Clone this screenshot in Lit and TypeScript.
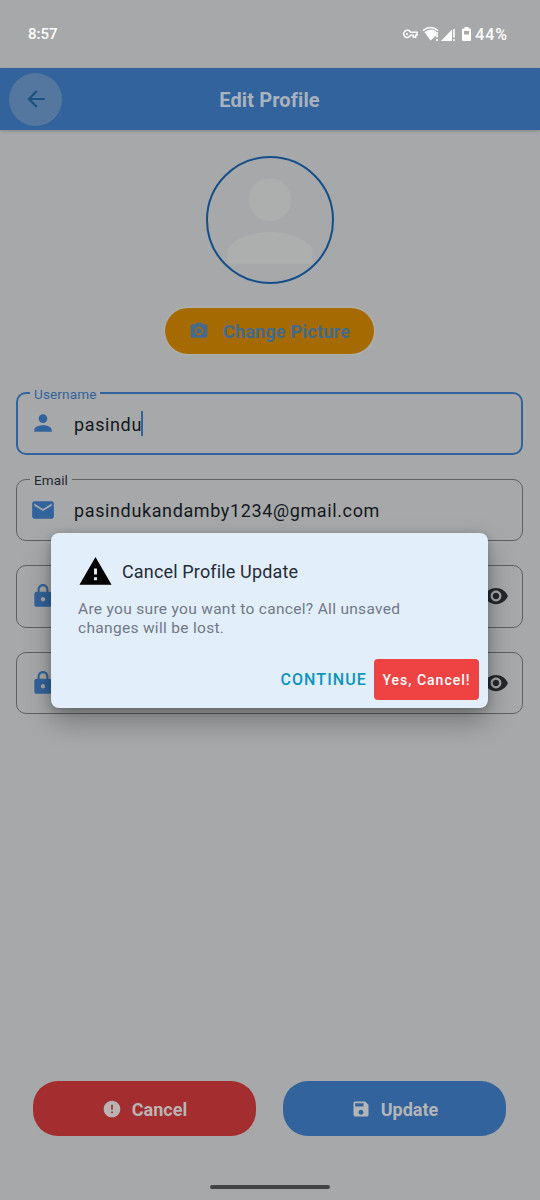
import { LitElement, html, css, svg, nothing } from "lit";
import { customElement, property } from "lit/decorators.js";

const icons = {
  back: svg`<path d="M20 11H7.83l5.59-5.59L12 4l-8 8 8 8 1.41-1.41L7.83 13H20z"/>`,
  camera: svg`<path fill-rule="evenodd" d="M9 2 7.17 4H4a2 2 0 0 0-2 2v12c0 1.100.9 2 2 2h16a2 2 0 0 0 2-2V6a2 2 0 0 0-2-2h-3.170L15 2zM12 17a5 5 0 1 1 0-10 5 5 0 0 1 0 10z"/><circle cx="12" cy="12" r="3.200"/>`,
  person: svg`<path d="M12 12c2.210 0 4-1.790 4-4s-1.790-4-4-4-4 1.790-4 4 1.790 4 4 4zm0 2c-2.670 0-8 1.340-8 4v2h16v-2c0-2.660-5.330-4-8-4z"/>`,
  mail: svg`<path d="M20 4H4c-1.100 0-1.990.9-1.990 2L2 18c0 1.100.9 2 2 2h16c1.100 0 2-.9 2-2V6c0-1.100-.9-2-2-2zm0 4-8 5-8-5V6l8 5 8-5z"/>`,
  lock: svg`<path d="M18 8h-1V6c0-2.760-2.240-5-5-5S7 3.240 7 6v2H6c-1.100 0-2 .9-2 2v10c0 1.100.9 2 2 2h12c1.100 0 2-.9 2-2V10c0-1.100-.9-2-2-2zm-6 9c-1.100 0-2-.9-2-2s.9-2 2-2 2 .9 2 2-.9 2-2 2zm3.100-9H8.900V6c0-1.710 1.390-3.100 3.100-3.100s3.100 1.390 3.100 3.100z"/>`,
  eye: svg`<path d="M12 4.500C7 4.500 2.730 7.610 1 12c1.730 4.390 6 7.500 11 7.500s9.270-3.110 11-7.500c-1.730-4.390-6-7.500-11-7.500zM12 17c-2.760 0-5-2.240-5-5s2.240-5 5-5 5 2.240 5 5-2.240 5-5 5zm0-8c-1.660 0-3 1.340-3 3s1.340 3 3 3 3-1.340 3-3-1.340-3-3-3z"/>`,
  warning: svg`<path d="M1 21h22L12 2zm12-3h-2v-2h2zm0-4h-2v-4h2z"/>`,
  error: svg`<path d="M12 2C6.480 2 2 6.480 2 12s4.480 10 10 10 10-4.480 10-10S17.520 2 12 2zm1 15h-2v-2h2zm0-4h-2V7h2z"/>`,
  save: svg`<path d="M17 3H5a2 2 0 0 0-2 2v14a2 2 0 0 0 2 2h14c1.100 0 2-.9 2-2V7zm-5 16c-1.660 0-3-1.340-3-3s1.340-3 3-3 3 1.340 3 3-1.340 3-3 3zm3-10H5V5h10z"/>`,
};

const icon = (name: keyof typeof icons, size: number) =>
  html`<svg width=${size} height=${size} viewBox="0 0 24 24" fill="currentColor" aria-hidden="true">${icons[name]}</svg>`;

@customElement("profile-field")
class ProfileField extends LitElement {
  @property() label = "";
  @property() value = "";
  @property() icon: keyof typeof icons = "person";
  @property({ type: Boolean }) active = false;
  @property({ type: Boolean }) secret = false;

  static styles = css`
    :host { display: block; }
    svg { display: block; flex: none; }
    .box {
      position: relative;
      box-sizing: border-box;
      height: 62.500px;
      border: 1px solid #5e6062;
      border-radius: 10px;
      display: flex;
      align-items: center;
      padding: 0 13px 0 13px;
      color: #15181d;
    }
    .box.active { border: 2px solid #33639c; padding: 0 12px 0 12px; }
    .label {
      position: absolute;
      left: 13px;
      top: -9px;
      padding: 0 4px;
      background: #a6a8a9;
      font-size: 13.500px;
      line-height: 18px;
      letter-spacing: 0.100px;
      color: #25282c;
    }
    .active .label { left: 12px; color: #33639c; letter-spacing: 0.150px; }
    .lead { color: #33639c; width: 26px; }
    .value {
      flex: 1;
      display: flex;
      align-items: center;
      margin-left: 18px;
      padding-top: 2px;
      font-size: 18px;
      letter-spacing: 0.620px;
    }
    .caret { width: 2px; height: 25px; margin: -2px 0 0 -1px; background: #33639c; }
    .tail { color: #25272b; }
  `;

  render() {
    return html`<div class="box ${this.active ? "active" : ""}">
      ${this.label ? html`<span class="label">${this.label}</span>` : nothing}
      <span class="lead">${icon(this.icon, 26)}</span>
      <span class="value">${this.value}${this.active ? html`<span class="caret"></span>` : nothing}</span>
      ${this.secret ? html`<span class="tail">${icon("eye", 26)}</span>` : nothing}
    </div>`;
  }
}

@customElement("app-root")
class AppRoot extends LitElement {
  static styles = css`
    :host {
      display: flex;
      flex-direction: column;
      position: relative;
      box-sizing: border-box;
      width: 540px;
      height: 1200px;
      overflow: hidden;
      background: #a6a8a9;
      font-family: Roboto, sans-serif;
    }
    svg { display: block; flex: none; }
    .status {
      height: 68px;
      flex: none;
      box-sizing: border-box;
      display: flex;
      justify-content: space-between;
      align-items: center;
      padding: 0 32px 0 28px;
      color: #fff;
      font-size: 15px;
      font-weight: 500;
    }
    .signals { display: flex; align-items: center; }
    .percent { margin-left: 1px; font-size: 16px; letter-spacing: 0.900px; }
    .header {
      height: 62px;
      flex: none;
      display: grid;
      grid-template-columns: 53px 1fr 53px;
      align-items: center;
      padding: 0 10px 0 9px;
      background: #33639c;
      box-shadow: 0 1px 3px #85888b;
    }
    .back {
      width: 53px;
      height: 53px;
      border-radius: 50%;
      background: #53779f;
      color: #1d5280;
      display: grid;
      place-items: center;
    }
    .title {
      text-align: center;
      color: #a9b2bd;
      font-size: 20px;
      font-weight: 700;
      letter-spacing: 0.120px;
      padding-top: 2px;
    }
    .body { flex: 1; display: flex; flex-direction: column; align-items: center; }
    .avatar {
      margin-top: 26px;
      width: 128px;
      height: 128px;
      box-sizing: border-box;
      border: 2px solid #154f8a;
      border-radius: 50%;
      color: #adaeae;
      overflow: hidden;
    }
    .avatar svg { margin: -1px -2px; }
    .change {
      margin-top: 24px;
      margin-right: 1px;
      width: 209px;
      height: 46px;
      border-radius: 23px;
      background: #a66a02;
      box-shadow: 0 0 2px 1px #b2b2ac;
      color: #446b8f;
      display: flex;
      align-items: center;
      justify-content: center;
      gap: 14px;
      font-size: 18px;
      font-weight: 700;
      letter-spacing: 0.220px;
    }
    .fields {
      margin-top: 38px;
      margin-right: 1px;
      width: 507px;
      display: flex;
      flex-direction: column;
      gap: 24px;
    }
    .actions { margin-top: auto; margin-bottom: 49px; display: flex; gap: 27px; padding-right: 1px; }
    .action {
      width: 223px;
      height: 55px;
      border-radius: 25px;
      display: flex;
      align-items: center;
      justify-content: center;
      gap: 10px;
      color: #b3b5b7;
      font-size: 18px;
      font-weight: 700;
    }
    .action span { padding-top: 2px; }
    .cancel { background: #a32d2f; color: #bab3b3; }
    .update { background: #33639c; }
    .home {
      flex: none;
      width: 120px;
      height: 4px;
      border-radius: 2px;
      background: #434445;
      margin-bottom: 11px;
    }
    .dialog {
      position: absolute;
      left: 51px;
      top: 533px;
      width: 437px;
      height: 175px;
      box-sizing: border-box;
      display: flex;
      flex-direction: column;
      padding: 20px 9px 8px 27px;
      border-radius: 8px;
      background: #e3eefb;
      box-shadow: 0 13px 28px rgba(0, 0, 0, 0.300), 0 2px 8px rgba(0, 0, 0, 0.200);
    }
    .heading {
      display: flex;
      align-items: center;
      gap: 9px;
      height: 36px;
      font-size: 18px;
      letter-spacing: 0.150px;
      color: #252b36;
    }
    .heading span { padding-top: 1px; }
    .heading svg { color: #000; }
    .message {
      margin: 11px 0 0;
      font-size: 15.500px;
      line-height: 18.500px;
      letter-spacing: 0.310px;
      color: #707985;
    }
    .choices { margin-top: auto; display: flex; justify-content: flex-end; align-items: center; gap: 7px; }
    .continue { font-size: 16px; font-weight: 500; letter-spacing: 1.100px; color: #0a94c2; }
    .confirm {
      width: 105px;
      height: 41px;
      border-radius: 4px;
      background: #ef4343;
      color: #fff;
      display: grid;
      place-items: center;
      font-size: 14px;
      font-weight: 500;
      letter-spacing: 1px;
      white-space: nowrap;
    }
  `;

  render() {
    return html`
      <div class="status">
        <span>8:57</span>
        <div class="signals">
          <svg width="72" height="20" viewBox="0 0 72 20" fill="none" stroke="#fff">
            <path d="M8.500 8.300H15v3h-1.300v2h-2.400v-2H8.500A3.600 3.600 0 1 1 8.500 8.300z" stroke-width="1.500"/>
            <circle cx="5" cy="9.900" r="1" fill="#fff" stroke="none"/>
            <path d="M21 6.600q7.500-6.400 15 0" stroke-width="1.400"/>
            <path d="M22.500 8q6-4.500 11.500-1v4.500L28.500 16.500z" fill="#fff" stroke="none"/>
            <path d="M35 8v5.500M35 15v2M52 5v8.500M52 15v2" stroke-width="1.600"/>
            <path d="M39 17 50 5.500V17z" fill="#fff" stroke="none"/>
            <path fill-rule="evenodd" d="M62.500 3h4v1.500h1.300q1.200 0 1.200 1.200v10.100q0 1.200-1.200 1.200h-6.600q-1.200 0-1.200-1.200V5.700q0-1.200 1.200-1.200h1.300zM62 7v3.500h5V7z" fill="#fff" stroke="none"/>
          </svg>
          <span class="percent">44%</span>
        </div>
      </div>
      <div class="header">
        <div class="back">${icon("back", 26)}</div>
        <div class="title">Edit Profile</div>
      </div>
      <div class="body">
        <div class="avatar">${icon("person", 128)}</div>
        <div class="change">${icon("camera", 20)}<span>Change Picture</span></div>
        <div class="fields">
          <profile-field label="Username" value="pasindu" icon="person" active></profile-field>
          <profile-field label="Email" value="pasindukandamby1234@gmail.com" icon="mail"></profile-field>
          <profile-field icon="lock" secret></profile-field>
          <profile-field icon="lock" secret></profile-field>
        </div>
        <div class="actions">
          <div class="action cancel">${icon("error", 20)}<span>Cancel</span></div>
          <div class="action update">${icon("save", 20)}<span>Update</span></div>
        </div>
        <div class="home"></div>
      </div>
      <div class="dialog">
        <div class="heading">${icon("warning", 35)}<span>Cancel Profile Update</span></div>
        <p class="message">Are you sure you want to cancel? All unsaved<br />changes will be lost.</p>
        <div class="choices">
          <span class="continue">CONTINUE</span>
          <span class="confirm">Yes, Cancel!</span>
        </div>
      </div>
    `;
  }
}
